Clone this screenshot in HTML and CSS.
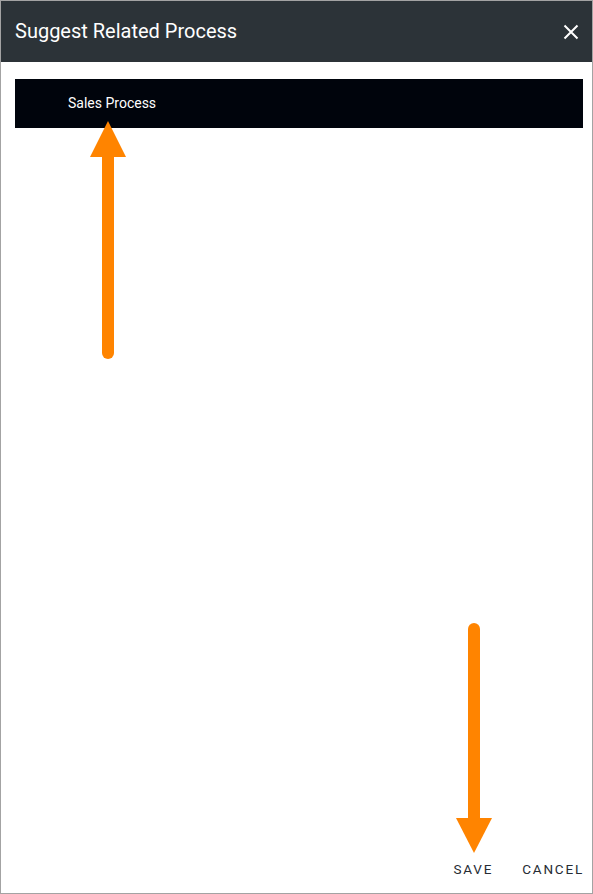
FILE: index.html
```html
<!DOCTYPE html>
<html>
  <head>
    <meta charset="UTF-8" />
    <title>Suggest Related Process</title>
    <link rel="stylesheet" href="styles.css">
  </head>
  <body>
    <div class="dialog">
      <div class="dialog-header">
        <h1 class="dialog-title">Suggest Related Process</h1>
        <button class="close-btn" aria-label="Close">
          <svg width="16" height="16" viewBox="0 0 16 16">
            <path d="M1.5 1.5 L14.5 14.5 M14.5 1.5 L1.5 14.5" stroke="#fff" stroke-width="2" />
          </svg>
        </button>
      </div>
      <div class="dialog-body">
        <div class="process-row">Sales Process</div>
      </div>
      <div class="dialog-footer">
        <button class="text-btn">SAVE</button>
        <button class="text-btn">CANCEL</button>
      </div>
      <!-- annotation arrows -->
      <svg class="annotations" width="593" height="894" viewBox="0 0 593 894">
        <line x1="108" y1="156" x2="108" y2="353" stroke="#ff8400" stroke-width="12" stroke-linecap="round" />
        <polygon points="108,121 90,157 126,157" fill="#ff8400" />
        <line x1="474" y1="629" x2="474" y2="819" stroke="#ff8400" stroke-width="12" stroke-linecap="round" />
        <polygon points="456,818 492,818 474,853" fill="#ff8400" />
      </svg>
    </div>
  </body>
</html>
```

FILE: styles.css
```css
* { box-sizing: border-box; }

body {
	margin: 0;
	font-family: Roboto, "Liberation Sans", sans-serif;
	background: #fff;
}

.dialog {
	position: relative;
	width: 593px;
	height: 894px;
	border: 1px solid #a3a3a3;
	display: flex;
	flex-direction: column;
	background: #fff;
}

.dialog-header {
	height: 61px;
	background-color: #2c3338;
	display: flex;
	align-items: center;
	justify-content: space-between;
	padding: 0 9px 0 14px;
}

.dialog-title {
	margin: 0;
	color: #fff;
	font-size: 20px;
	font-weight: 400;
	padding-bottom: 1px;
}

.close-btn {
	background: none;
	border: none;
	padding: 0;
	width: 24px;
	height: 24px;
	display: flex;
	align-items: center;
	justify-content: center;
	cursor: pointer;
}

.dialog-body {
	flex: 1;
	padding: 17px 9px 0 14px;
}

.process-row {
	height: 49px;
	background-color: #00040c;
	color: #fff;
	font-size: 14px;
	display: flex;
	align-items: center;
	padding-left: 53px;
	padding-bottom: 2px;
}

.dialog-footer {
	display: flex;
	justify-content: flex-end;
	gap: 29px;
	padding: 0 8px 16px 0;
}

.text-btn {
	background: none;
	border: none;
	padding: 0;
	font-family: Roboto, "Liberation Sans", sans-serif;
	font-size: 13.5px;
	font-weight: 400;
	letter-spacing: 1.8px;
	color: #262c34;
	cursor: pointer;
}

.annotations {
	position: absolute;
	top: -1px;
	left: -1px;
	pointer-events: none;
}
```
